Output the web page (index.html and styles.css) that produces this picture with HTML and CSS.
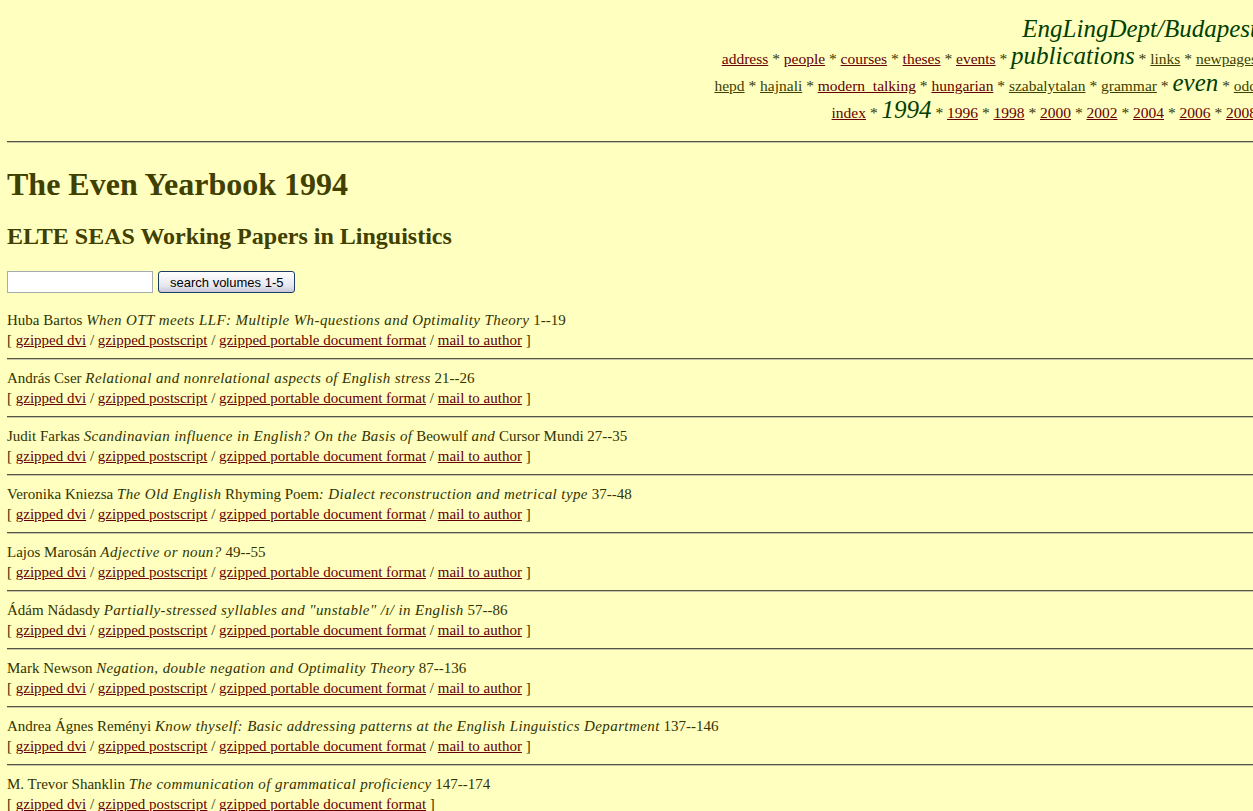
FILE: index.html
```html
<!DOCTYPE html>
<html lang="en">
<head>
    <meta charset="UTF-8">
    <title>The Even Yearbook 1994</title>
    <link rel="stylesheet" href="styles.css">
</head>
<body>
<div class="header">
    <div class="site">EngLingDept/Budapest</div>
    <div class="nav">
        <a href="#">address</a> * <a href="#">people</a> * <a href="#">courses</a> * <a href="#">theses</a> * <a href="#">events</a> * <span class="here">publications</span> * <a href="#" class="seen">links</a> * <a href="#" class="seen">newpages</a><br>
        <a href="#" class="seen">hepd</a> * <a href="#" class="seen">hajnali</a> * <a href="#">modern&nbsp;&nbsp;talking</a> * <a href="#">hungarian</a> * <a href="#" class="seen">szabalytalan</a> * <a href="#" class="seen">grammar</a> * <span class="here">even</span> * <a href="#" class="seen">odd</a><br>
        <a href="#">index</a> * <span class="here year">1994</span> * <a href="#">1996</a> * <a href="#">1998</a> * <a href="#">2000</a> * <a href="#">2002</a> * <a href="#">2004</a> * <a href="#">2006</a> * <a href="#">2008</a>
    </div>
</div>
<hr>

<h1>The Even Yearbook 1994</h1>
<h2>ELTE SEAS Working Papers in Linguistics</h2>

<form class="search">
    <input type="text" class="query">
    <button type="button" class="go">search volumes 1-5</button>
</form>

<div class="paper">
    Huba Bartos <i>When OTT meets LLF: Multiple Wh-questions and Optimality Theory</i> 1--19<br>
    [ <a href="#">gzipped dvi</a> / <a href="#">gzipped postscript</a> / <a href="#">gzipped portable document format</a> / <a href="#">mail to author</a> ]
</div>
<hr>
<div class="paper">
    András Cser <i>Relational and nonrelational aspects of English stress</i> 21--26<br>
    [ <a href="#">gzipped dvi</a> / <a href="#">gzipped postscript</a> / <a href="#">gzipped portable document format</a> / <a href="#">mail to author</a> ]
</div>
<hr>
<div class="paper">
    Judit Farkas <i>Scandinavian influence in English? On the Basis of</i> Beowulf <i>and</i> Cursor Mundi 27--35<br>
    [ <a href="#">gzipped dvi</a> / <a href="#">gzipped postscript</a> / <a href="#">gzipped portable document format</a> / <a href="#">mail to author</a> ]
</div>
<hr>
<div class="paper">
    Veronika Kniezsa <i>The Old English</i> Rhyming Poem<i>: Dialect reconstruction and metrical type</i> 37--48<br>
    [ <a href="#">gzipped dvi</a> / <a href="#">gzipped postscript</a> / <a href="#">gzipped portable document format</a> / <a href="#">mail to author</a> ]
</div>
<hr>
<div class="paper">
    Lajos Marosán <i>Adjective or noun?</i> 49--55<br>
    [ <a href="#">gzipped dvi</a> / <a href="#">gzipped postscript</a> / <a href="#">gzipped portable document format</a> / <a href="#">mail to author</a> ]
</div>
<hr>
<div class="paper">
    Ádám Nádasdy <i>Partially-stressed syllables and "unstable" /ɪ/ in English</i> 57--86<br>
    [ <a href="#">gzipped dvi</a> / <a href="#">gzipped postscript</a> / <a href="#">gzipped portable document format</a> / <a href="#">mail to author</a> ]
</div>
<hr>
<div class="paper">
    Mark Newson <i>Negation, double negation and Optimality Theory</i> 87--136<br>
    [ <a href="#">gzipped dvi</a> / <a href="#">gzipped postscript</a> / <a href="#">gzipped portable document format</a> / <a href="#">mail to author</a> ]
</div>
<hr>
<div class="paper">
    Andrea Ágnes Reményi <i>Know thyself: Basic addressing patterns at the English Linguistics Department</i> 137--146<br>
    [ <a href="#">gzipped dvi</a> / <a href="#">gzipped postscript</a> / <a href="#">gzipped portable document format</a> / <a href="#">mail to author</a> ]
</div>
<hr>
<div class="paper">
    M. Trevor Shanklin <i>The communication of grammatical proficiency</i> 147--174<br>
    [ <a href="#">gzipped dvi</a> / <a href="#">gzipped postscript</a> / <a href="#">gzipped portable document format</a> ]
</div>
<hr>
</body>
</html>
```

FILE: styles.css
```css
body {
    margin: 8px 7px;
    width: 1250px;
    background: #ffffc0;
    color: #333300;
    font-family: "Liberation Serif", "Times New Roman", serif;
    font-size: 15px;
}
a { color: #660000; }
a.seen { color: #404000; }
i { letter-spacing: 0.4px; }
hr {
    border: none;
    border-top: 1px solid #555544;
    border-bottom: 1px solid #c8c8a8;
    margin: 8px 0;
}
.header {
    text-align: right;
    padding-top: 7px;
    margin-bottom: 15px;
}
.site {
    font-style: italic;
    font-size: 25px;
    color: #004000;
    line-height: 28px;
    margin-bottom: 2px;
}
.nav {
    font-size: 15.5px;
    line-height: 27px;
}
.here {
    font-style: italic;
    font-size: 25px;
    line-height: 20px;
    color: #004000;
}
.here.year { font-size: 25px; }
h1 {
    font-size: 32px;
    color: #404000;
    margin: 19px 0 0;
    line-height: 44px;
}
h2 {
    font-size: 24px;
    color: #404000;
    margin: 13px 0 0;
    line-height: 34px;
}
.search {
    margin: 18px 0 17px;
    display: flex;
    gap: 5px;
    align-items: center;
}
.query {
    width: 140px;
    height: 16px;
    border: 1px solid #a5acb2;
    padding: 2px;
    background: #fff;
}
.go {
    font-family: "Liberation Sans", Arial, sans-serif;
    font-size: 13px;
    height: 22px;
    padding: 0 11px;
    border: 1px solid #1c3d68;
    border-radius: 3px;
    background: linear-gradient(#ffffff, #e6e6ee 70%, #c8c8d8);
    color: #000;
}
.paper {
    line-height: 20px;
}
```
